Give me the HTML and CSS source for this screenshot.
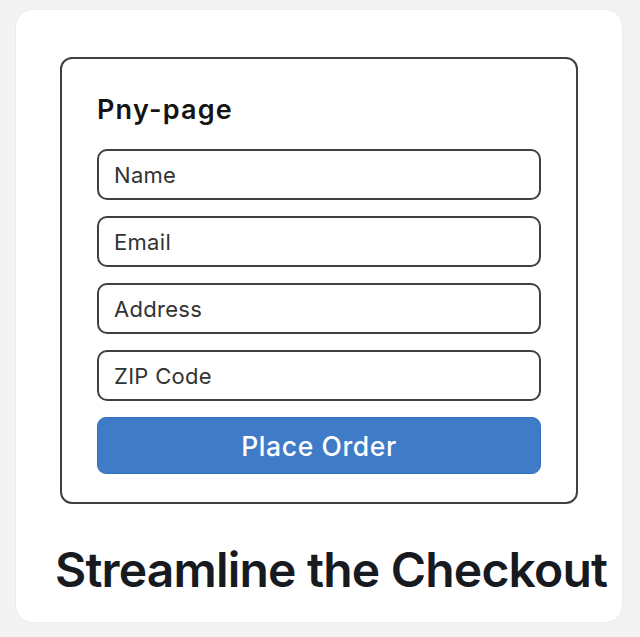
FILE: index.html
```html
<!DOCTYPE html>
<html>
<head>
<meta charset="utf-8">
<link rel="stylesheet" href="styles.css">
</head>
<body>
<div class="card">
  <div class="panel">
    <h1 class="brand">Pny-page</h1>
    <div class="field">Name</div>
    <div class="field">Email</div>
    <div class="field">Address</div>
    <div class="field">ZIP Code</div>
    <div class="button">Place Order</div>
  </div>
  <h2 class="headline">Streamline the Checkout</h2>
</div>
</body>
</html>
```

FILE: styles.css
```css
html, body {
  margin: 0;
  padding: 0;
  background: #f3f3f3;
}
body {
  font-family: Inter, "Noto Sans", sans-serif;
  width: 640px;
  height: 637px;
  overflow: hidden;
}
.card {
  margin: 9px 0 0 15px;
  width: 608px;
  height: 614px;
  box-sizing: border-box;
  background: #ffffff;
  border: 1px solid #ececec;
  border-radius: 18px;
  padding: 47px 0 0 44px;
}
.panel {
  width: 518px;
  height: 447px;
  box-sizing: border-box;
  border: 2px solid #404040;
  border-radius: 12px;
  padding: 31px 35px 0 35px;
  display: flex;
  flex-direction: column;
  gap: 16px;
}
.brand {
  margin: 0 0 3px 0;
  font-size: 27px;
  font-weight: 600;
  color: #141414;
  line-height: 40px;
  letter-spacing: 1.2px;
}
.field {
  height: 51px;
  box-sizing: border-box;
  border: 2px solid #404040;
  border-radius: 10px;
  padding: 0 15px;
  display: flex;
  align-items: center;
  font-size: 22px;
  letter-spacing: 0.3px;
  color: #333333;
}
.button {
  height: 57px;
  background: #3f7bc7;
  border: 1px solid #3470c0;
  border-radius: 9px;
  box-sizing: border-box;
  display: flex;
  align-items: center;
  justify-content: center;
  color: #ffffff;
  font-size: 26.5px;
  font-weight: 500;
  letter-spacing: 0.6px;
}
.headline {
  margin: 39px 0 0 -5px;
  font-size: 48px;
  font-weight: 600;
  color: #171a1f;
  line-height: 54px;
  letter-spacing: -0.8px;
  white-space: nowrap;
}
```
